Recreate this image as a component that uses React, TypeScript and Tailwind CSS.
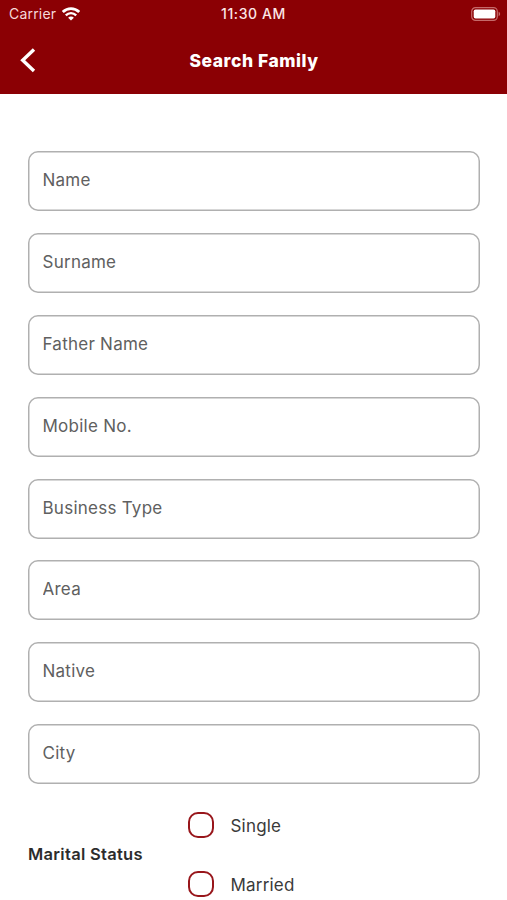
const fields = [
  "Name",
  "Surname",
  "Father Name",
  "Mobile No.",
  "Business Type",
  "Area",
  "Native",
  "City",
];

const StatusBar = () => {
  return (
    <div className="grid grid-cols-3 h-[27px] items-center pl-[9px] pr-[9px] text-white">
      <div className="flex items-center gap-[6px]">
        <span className="text-[14px] leading-none tracking-[0.2px] text-[#f6d9d9]">Carrier</span>
        <svg width="18" height="14" viewBox="0 0 18 14" fill="none" stroke="white">
          <path d="M0.8 5C5.5 0.4 12.5 0.4 17.2 5" strokeWidth="2.8" />
          <path d="M3.8 8.3C6.8 5.4 11.2 5.4 14.2 8.3" strokeWidth="2.4" />
          <path d="M9 13.6L6.1 10.8C7.6 9.2 10.4 9.2 11.9 10.8Z" fill="white" stroke="none" />
        </svg>
      </div>
      <p className="text-center text-[14px] leading-none font-medium tracking-[0.6px] text-[#fbe6e6]">
        11:30 AM
      </p>
      <svg className="justify-self-end -mr-[3px]" width="30" height="14" viewBox="0 0 30 14">
        <rect x="0.7" y="0.6" width="25.6" height="12.8" rx="3.8" fill="none" stroke="#c56a6a" strokeWidth="1.2" />
        <rect x="2.7" y="2.4" width="21.6" height="9.2" rx="1.8" fill="white" />
        <path d="M27.6 4.8C29.6 5.5 29.6 8.5 27.6 9.2Z" fill="#c56a6a" />
      </svg>
    </div>
  );
};

const Header = () => {
  return (
    <header className="h-[93.5px] bg-[#8b0004]">
      <StatusBar />
      <div className="grid grid-cols-[60px_1fr_60px] h-[66px] items-center">
        <button className="pl-[20px]" aria-label="Back">
          <svg width="16" height="25" viewBox="0 0 16 25" fill="none" stroke="white" strokeWidth="3.4">
            <path d="M14 1.5L2.7 12.2L14 23" />
          </svg>
        </button>
        <h1 className="pt-px pl-px text-center text-[17.5px] leading-none font-extrabold tracking-[0.52px] text-white">
          Search Family
        </h1>
      </div>
    </header>
  );
};

const Field = ({ label }: { label: string }) => {
  return (
    <input
      className="block w-full h-[60px] rounded-[10px] pl-[15px] pr-[14px] pb-[2px] text-[17px] tracking-[0.25px] text-[#333] placeholder:text-[#606060] shadow-[inset_0_0_0_1.5px_#b0b0b0] outline-none"
      placeholder={label}
    />
  );
};

const Option = ({ label }: { label: string }) => {
  return (
    <label className="flex items-center gap-[17px] h-[26px]">
      <span className="size-[26px] rounded-[10px] border-2 border-[#98161b]" />
      <span className="pt-[2px] text-[17px] leading-none tracking-[0.2px] text-[#3a3a3a]">{label}</span>
    </label>
  );
};

const App = () => {
  return (
    <div className="h-[900px] overflow-hidden bg-white font-['Inter',sans-serif]">
      <Header />
      <main className="px-[27.5px] pt-[57.6px]">
        {/* Search fields */}
        <div className="flex flex-col gap-[21.86px]">
          {fields.map((field) => (
            <Field key={field} label={field} />
          ))}
        </div>
        {/* Marital status */}
        <div className="flex items-center pt-[28px]">
          <p className="w-[160px] pl-[0.5px] text-[16.5px] leading-none font-semibold tracking-[0.3px] text-[#2c2c2c]">
            Marital Status
          </p>
          <div className="flex flex-col gap-[33px]">
            <Option label="Single" />
            <Option label="Married" />
          </div>
        </div>
      </main>
    </div>
  );
};

export default App;
